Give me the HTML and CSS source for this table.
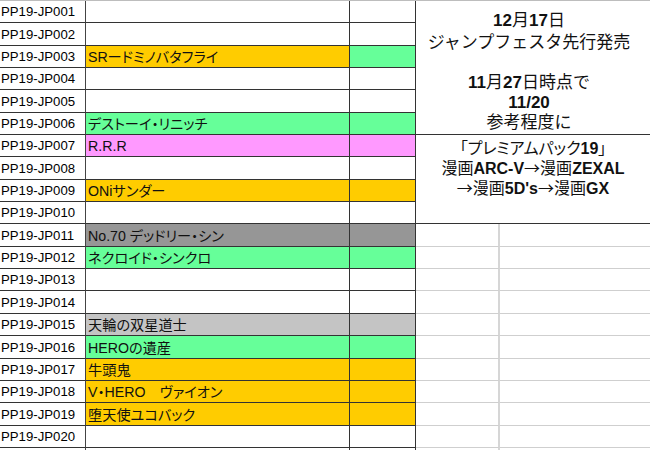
FILE: index.html
```html
<!DOCTYPE html>
<html lang="ja">
<head>
<meta charset="utf-8">
<link rel="stylesheet" href="styles.css">
</head>
<body>
<div class="sheet">
  <div class="box box1">
    <div class="l"><b>12</b>月<b>17</b>日</div>
    <div class="l">ジャンプフェスタ先行発売</div>
    <div class="l">&nbsp;</div>
    <div class="l"><b>11</b>月<b>27</b>日時点で</div>
    <div class="l"><b>11/20</b></div>
    <div class="l">参考程度に</div>
  </div>
  <div class="box box2">
    <div class="l">「プレミアムパック<b>19</b>」</div>
    <div class="l">漫画<b>ARC-V</b><span class="ar">→</span>漫画<b>ZEXAL</b></div>
    <div class="l"><span class="ar">→</span>漫画<b>5D's</b><span class="ar">→</span>漫画<b>GX</b></div>
  </div>

  <div class="c a">PP19-JP001</div><div class="c b"></div><div class="c k"></div>
  <div class="c a">PP19-JP002</div><div class="c b"></div><div class="c k"></div>
  <div class="c a">PP19-JP003</div><div class="c b or">SRードミノバタフライ</div><div class="c k gr"></div>
  <div class="c a">PP19-JP004</div><div class="c b"></div><div class="c k"></div>
  <div class="c a">PP19-JP005</div><div class="c b"></div><div class="c k"></div>
  <div class="c a">PP19-JP006</div><div class="c b gr">デストーイ・リニッチ</div><div class="c k gr"></div>
  <div class="c a">PP19-JP007</div><div class="c b pk">R.R.R</div><div class="c k pk"></div>
  <div class="c a">PP19-JP008</div><div class="c b"></div><div class="c k"></div>
  <div class="c a">PP19-JP009</div><div class="c b or">ONiサンダー</div><div class="c k or"></div>
  <div class="c a">PP19-JP010</div><div class="c b"></div><div class="c k"></div>
  <div class="c a">PP19-JP011</div><div class="c b dg">No.70 デッドリー・シン</div><div class="c k dg"></div><div class="c d"></div><div class="c e"></div>
  <div class="c a">PP19-JP012</div><div class="c b gr">ネクロイド・シンクロ</div><div class="c k gr"></div><div class="c d"></div><div class="c e"></div>
  <div class="c a">PP19-JP013</div><div class="c b"></div><div class="c k"></div><div class="c d"></div><div class="c e"></div>
  <div class="c a">PP19-JP014</div><div class="c b"></div><div class="c k"></div><div class="c d"></div><div class="c e"></div>
  <div class="c a">PP19-JP015</div><div class="c b lg">天輪の双星道士</div><div class="c k lg"></div><div class="c d"></div><div class="c e"></div>
  <div class="c a">PP19-JP016</div><div class="c b gr">HEROの遺産</div><div class="c k gr"></div><div class="c d"></div><div class="c e"></div>
  <div class="c a">PP19-JP017</div><div class="c b or">牛頭鬼</div><div class="c k or"></div><div class="c d"></div><div class="c e"></div>
  <div class="c a">PP19-JP018</div><div class="c b or">V・HERO　ヴァイオン</div><div class="c k or"></div><div class="c d"></div><div class="c e"></div>
  <div class="c a">PP19-JP019</div><div class="c b or">堕天使ユコバック</div><div class="c k or"></div><div class="c d"></div><div class="c e"></div>
  <div class="c a">PP19-JP020</div><div class="c b"></div><div class="c k"></div><div class="c d"></div><div class="c e"></div>
  <div class="c a"></div><div class="c b"></div><div class="c k"></div><div class="c d"></div><div class="c e"></div>
</div>
</body>
</html>
```
FILE: styles.css
```css
html, body {
  margin: 0;
  padding: 0;
  background: #fff;
  overflow: hidden;
}
body {
  width: 650px;
  height: 450px;
  font-family: "Liberation Sans", "Noto Sans CJK JP", sans-serif;
  color: #111;
}
.sheet {
  display: grid;
  grid-template-columns: 86px 264px 66px 84px 150px;
  grid-template-rows: repeat(21, 22.35px);
  border-top: 1px solid #bdbdbd;
}
.c {
  box-sizing: border-box;
  border-right: 1px solid #333;
  border-bottom: 1px solid #333;
  display: flex;
  align-items: flex-end;
  white-space: nowrap;
  overflow: hidden;
  line-height: 18px;
  padding-bottom: 1px;
}
.a {
  font-size: 13.2px;
  padding-left: 1px;
  color: #000;
  border-right-color: #444;
}
.b {
  font-size: 14.2px;
  padding-left: 2px;
  font-feature-settings: "palt";
}
.d {
  border-right: 2px solid #d6d6d6;
  border-bottom: 1px solid #cfcfcf;
}
.e {
  border-right: none;
  border-bottom: 1px solid #cfcfcf;
}
.or { background: #ffcc00; }
.gr { background: #66ff99; }
.pk { background: #ff99ff; }
.dg { background: #969696; }
.lg { background: #c4c4c4; }

.box {
  box-sizing: border-box;
  grid-column: 4 / 6;
  border-bottom: 1px solid #333;
  display: flex;
  flex-direction: column;
  align-items: center;
  text-align: center;
  color: #111;
  font-size: 17px;
}
.box b { font-weight: bold; }
.box1 {
  grid-row: 1 / 7;
  justify-content: flex-end;
  line-height: 20px;
  padding-bottom: 1px;
  padding-right: 8px;
}
.box1 .l:nth-child(1) { margin-bottom: 2px; }
.box2 {
  grid-row: 7 / 11;
  justify-content: flex-start;
  line-height: 19px;
  padding-top: 4px;
  font-size: 16px;
}
.box2 .l { font-feature-settings: "palt"; }
.ar {
  font-family: "Noto Sans CJK JP", sans-serif;
  font-feature-settings: normal;
}
.l { white-space: nowrap; }
```
